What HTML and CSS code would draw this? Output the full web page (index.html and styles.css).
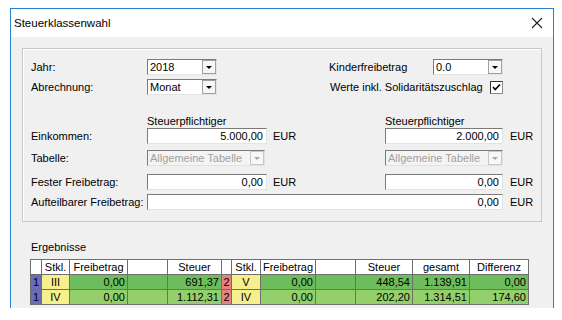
FILE: index.html
```html
<!DOCTYPE html>
<html lang="de">
<head>
    <meta charset="UTF-8">
    <title>Steuerklassenwahl</title>
    <link rel="stylesheet" href="styles.css">
</head>
<body>
    <div class="window">
        <div class="titlebar">
            <span class="title">Steuerklassenwahl</span>
            <svg class="close" width="12" height="12" viewBox="0 0 12 12"><path d="M1 1 L11 11 M11 1 L1 11" stroke="#222" stroke-width="1.1" fill="none"/></svg>
        </div>
        <div class="content">
            <div class="group">
                <div class="row r1">
                    <span class="lbl">Jahr:</span>
                    <div class="combo small"><span class="val">2018</span><span class="btn"><i class="arrow"></i></span></div>
                    <div class="right">
                        <span class="lbl">Kinderfreibetrag</span>
                        <div class="combo small"><span class="val">0.0</span><span class="btn"><i class="arrow"></i></span></div>
                    </div>
                </div>
                <div class="row r2">
                    <span class="lbl">Abrechnung:</span>
                    <div class="combo small"><span class="val">Monat</span><span class="btn"><i class="arrow"></i></span></div>
                    <div class="right">
                        <span class="lbl">Werte inkl. Solidaritätszuschlag</span>
                        <svg class="check" width="13" height="13" viewBox="0 0 13 13"><rect x="0.5" y="0.5" width="12" height="12" fill="#fff" stroke="#8a8a8a"/><path d="M0.5 12.5 V0.5 H12.5" stroke="#333" fill="none"/><path d="M3 6 L5.2 8.5 L10 3.5" stroke="#000" stroke-width="1.6" fill="none"/></svg>
                    </div>
                </div>
                <div class="row r3">
                    <span></span>
                    <span class="lbl">Steuerpflichtiger</span>
                    <span></span>
                    <span class="lbl">Steuerpflichtiger</span>
                </div>
                <div class="row r4">
                    <span class="lbl">Einkommen:</span>
                    <div class="field">5.000,00</div>
                    <span class="unit">EUR</span>
                    <div class="field">2.000,00</div>
                    <span class="unit">EUR</span>
                </div>
                <div class="row r5">
                    <span class="lbl">Tabelle:</span>
                    <div class="combo wide disabled"><span class="val">Allgemeine Tabelle</span><span class="btn"><i class="arrow"></i></span></div>
                    <span></span>
                    <div class="combo wide disabled"><span class="val">Allgemeine Tabelle</span><span class="btn"><i class="arrow"></i></span></div>
                </div>
                <div class="row r6">
                    <span class="lbl">Fester Freibetrag:</span>
                    <div class="field">0,00</div>
                    <span class="unit">EUR</span>
                    <div class="field">0,00</div>
                    <span class="unit">EUR</span>
                </div>
                <div class="row r7">
                    <span class="lbl">Aufteilbarer Freibetrag:</span>
                    <div class="field span3">0,00</div>
                    <span class="unit">EUR</span>
                </div>
            </div>

            <div class="results-label">Ergebnisse</div>
            <table class="results">
                <colgroup>
                    <col style="width: 11px">
                    <col style="width: 28px">
                    <col style="width: 58px">
                    <col style="width: 40px">
                    <col style="width: 54px">
                    <col style="width: 10px">
                    <col style="width: 29px">
                    <col style="width: 55px">
                    <col style="width: 40px">
                    <col style="width: 57px">
                    <col style="width: 57px">
                    <col style="width: 59px">
                </colgroup>
                <tr class="head">
                    <th></th><th>Stkl.</th><th>Freibetrag</th><th></th><th>Steuer</th><th></th>
                    <th>Stkl.</th><th>Freibetrag</th><th></th><th>Steuer</th><th>gesamt</th><th>Differenz</th>
                </tr>
                <tr class="dark">
                    <td class="idx">1</td><td class="stkl">III</td><td>0,00</td><td></td><td>691,37</td><td class="idx2">2</td>
                    <td class="stkl">V</td><td>0,00</td><td></td><td>448,54</td><td>1.139,91</td><td>0,00</td>
                </tr>
                <tr class="light">
                    <td class="idx">1</td><td class="stkl">IV</td><td>0,00</td><td></td><td>1.112,31</td><td class="idx2">2</td>
                    <td class="stkl">IV</td><td>0,00</td><td></td><td>202,20</td><td>1.314,51</td><td>174,60</td>
                </tr>
            </table>
        </div>
    </div>
</body>
</html>
```

FILE: styles.css
```css
body {
    margin: 0;
    background: #fff;
    font-family: "Liberation Sans", Arial, sans-serif;
    font-size: 11px;
    color: #000;
    height: 320px;
    overflow: hidden;
}
.window {
    margin: 8px 0 0 10px;
    width: 544px;
    height: 300px;
    box-sizing: border-box;
    border: 1px solid #2b7fd0;
    border-bottom: none;
    overflow: hidden;
    background: #f0f0f0;
}
.titlebar {
    height: 28px;
    background: #fff;
    display: flex;
    align-items: center;
    justify-content: space-between;
    padding: 0 10px 0 3px;
}
.title {
    font-size: 11.5px;
}
.content {
    padding: 11px 11px 0 11px;
}
.group {
    border: 1px solid #c8c8c8;
    box-shadow: inset 1px 1px 0 #fff;
    padding: 10px 0 11px 8px;
}
.row {
    display: grid;
    grid-template-columns: 116px 120px 118px 118px 1fr;
    align-items: center;
    height: 16px;
}
.r2 { margin-top: 4px; }
.r3 { margin-top: 19px; height: 14px; }
.r5 { margin-top: 6px; }
.r6 { margin-top: 8px; }
.r7 { margin-top: 4px; }
.right {
    grid-column: 3 / 5;
    display: flex;
    align-items: center;
    justify-content: space-between;
    padding-left: 62px;
}
.r2 .right { padding-left: 63px; }
.unit {
    padding-left: 6px;
}
.row > .unit:last-child {
    padding-left: 7px;
}
.field {
    height: 16px;
    box-sizing: border-box;
    background: #fff;
    border: 1px solid #e3e3e3;
    border-top-color: #7a7a7a;
    border-left-color: #7a7a7a;
    text-align: right;
    padding-right: 3px;
    line-height: 14px;
}
.r4 .field:nth-of-type(2), .r6 .field:nth-of-type(2) {
    width: 118px;
}
.span3 {
    grid-column: 2 / 5;
}
.combo {
    display: flex;
    height: 16px;
    box-sizing: border-box;
    background: #fff;
    border: 1px solid #e3e3e3;
    border-top-color: #7a7a7a;
    border-left-color: #7a7a7a;
}
.combo.small { width: 70px; }
.combo.wide { width: 118px; }
.combo .val {
    flex: 1;
    padding-left: 2px;
    line-height: 14px;
    white-space: nowrap;
    overflow: hidden;
}
.combo .btn {
    width: 14px;
    box-sizing: border-box;
    border: 1px solid #a0a0a0;
    background: #f7f7f7;
    display: flex;
    align-items: center;
    justify-content: center;
}
.arrow {
    width: 0;
    height: 0;
    border-left: 3px solid transparent;
    border-right: 3px solid transparent;
    border-top: 3px solid #000;
}
.combo.disabled {
    background: #f4f4f4;
    color: #a0a0a0;
}
.combo.disabled .btn {
    border-color: #c8c8c8;
}
.combo.disabled .arrow {
    border-top-color: #a8a8a8;
}
.check {
    display: block;
}
.results-label {
    margin: 19px 0 0 9px;
    height: 18px;
}
.results {
    margin-left: 8px;
    border-collapse: collapse;
    table-layout: fixed;
    width: 498px;
}
.results th, .results td {
    border: 1px solid #6e6e6e;
    height: 14px;
    padding: 0 2px 0 0;
    line-height: 14px;
    font-size: 11px;
    font-weight: normal;
    white-space: nowrap;
    overflow: hidden;
    text-align: right;
}
.results th {
    background: #fff;
    text-align: center;
    padding: 0;
}
.results .dark td { background: #6dbd5c; }
.results .light td { background: #93cf6b; }
.results td.idx {
    background: #6a6db6;
    text-align: center;
    padding: 0;
}
.results td.idx2 {
    background: #e78080;
    text-align: center;
    padding: 0;
}
.results td.stkl {
    background: #f6ef8e;
    text-align: center;
    padding: 0;
}
```
